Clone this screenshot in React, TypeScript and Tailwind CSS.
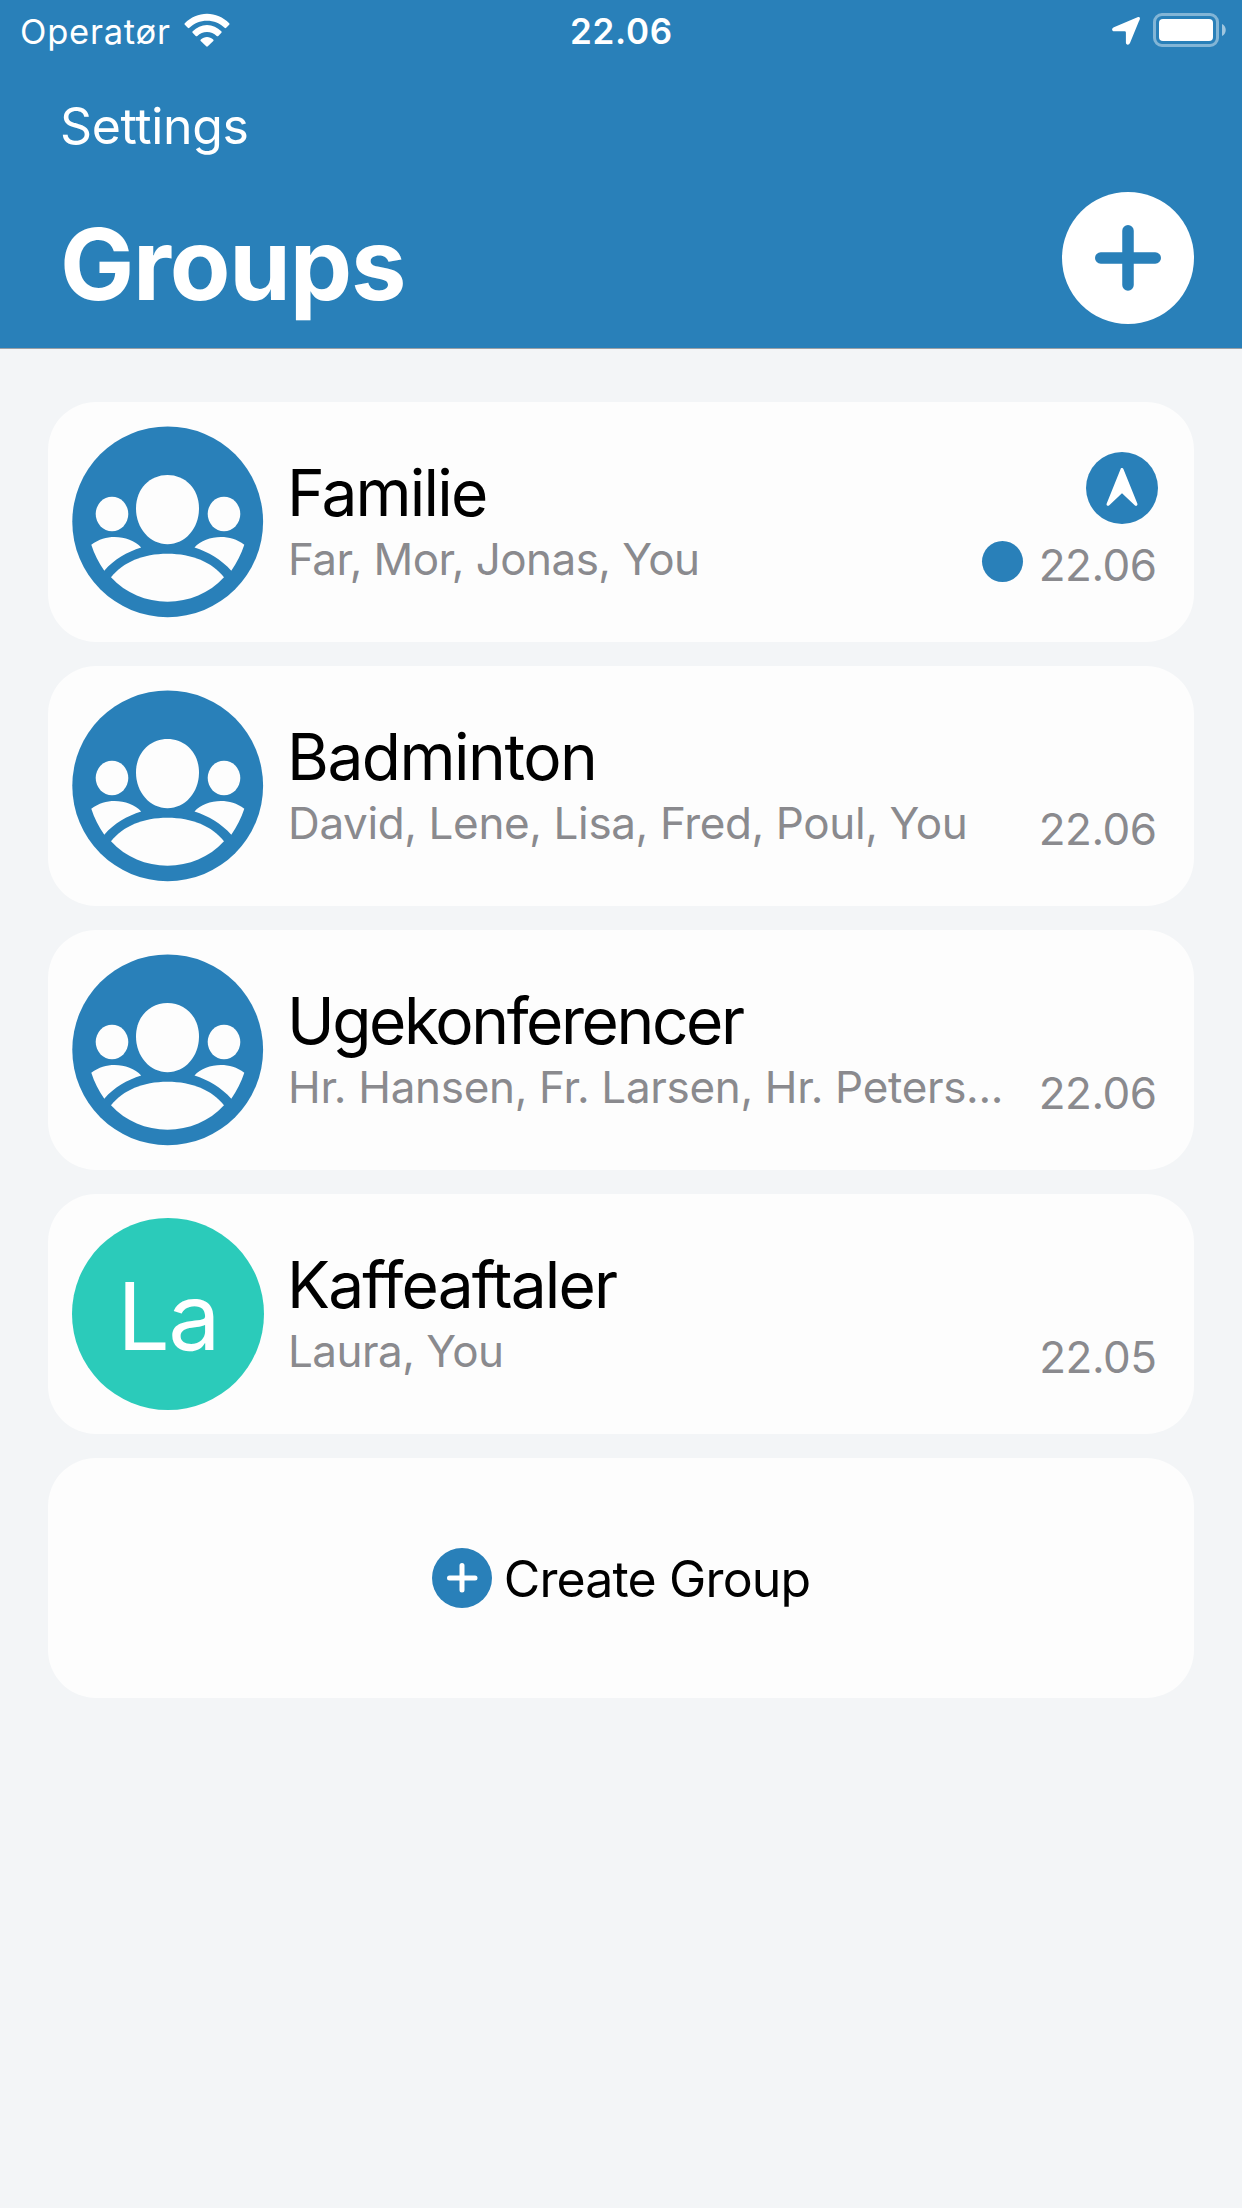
import type { ReactNode } from "react";

type Group = {
  name: string;
  nameClass: string;
  members: string;
  membersClass: string;
  time: string;
  active?: boolean;
  initials?: string;
};

const groups: Group[] = [
  {
    name: "Familie",
    nameClass: "tracking-[-1.8px]",
    members: "Far, Mor, Jonas, You",
    membersClass: "tracking-[-0.57px]",
    time: "22.06",
    active: true,
  },
  {
    name: "Badminton",
    nameClass: "tracking-[-1.5px]",
    members: "David, Lene, Lisa, Fred, Poul, You",
    membersClass: "tracking-[-0.37px]",
    time: "22.06",
  },
  {
    name: "Ugekonferencer",
    nameClass: "tracking-[-2.4px]",
    members: "Hr. Hansen, Fr. Larsen, Hr. Peters...",
    membersClass: "tracking-[-0.32px]",
    time: "22.06",
  },
  {
    name: "Kaffeaftaler",
    nameClass: "tracking-[-1.85px]",
    members: "Laura, You",
    membersClass: "tracking-[-0.53px]",
    time: "22.05",
    initials: "La",
  },
];

function WifiIcon() {
  return (
    <svg viewBox="0 0 46 34" className="h-[34px] w-[46px]" fill="#fff">
      <path d="M0.8 11.8 Q0 11 0.8 10.2 C7 4.2 14.6 0.8 23 0.8 C31.4 0.8 39 4.2 45.2 10.2 Q46 11 45.2 11.8 L42.2 14.8 Q41.4 15.6 40.6 14.8 C35.8 10.4 29.8 7.8 23 7.8 C16.2 7.8 10.2 10.4 5.4 14.8 Q4.6 15.6 3.8 14.8 Z" />
      <path d="M8.6 19.8 Q7.9 19 8.7 18.3 C12.7 14.5 17.5 12 23 12 C28.5 12 33.3 14.5 37.3 18.3 Q38.1 19 37.4 19.8 L34.3 22.9 Q33.5 23.7 32.7 23 C30 20.6 26.8 19 23 19 C19.2 19 16 20.6 13.3 23 Q12.5 23.7 11.7 22.9 Z" />
      <path d="M16.7 27.9 Q16 27.1 16.8 26.4 C18.6 24.9 20.7 24 23 24 C25.3 24 27.4 24.9 29.2 26.4 Q30 27.1 29.3 27.9 L23.8 33.3 Q23 34 22.2 33.3 Z" />
    </svg>
  );
}

function LocationArrowIcon() {
  return (
    <svg viewBox="0 0 28 28" className="h-7 w-7" fill="#fff">
      <path d="M25.5 0.3 C27.3 -0.4 28.3 0.7 27.8 2.3 C27.6 3 27.3 3.7 26.9 4.3 L18.1 25.8 C17.1 28.5 13.9 28.3 13.9 25.6 L13.9 15.5 Q13.9 14.3 12.7 14.3 L2.3 14.3 C-0.4 14.3 -0.7 11.3 1.9 10.2 Z" />
    </svg>
  );
}

function BatteryIcon() {
  return (
    <svg viewBox="0 0 74 34" className="h-[34px] w-[74px]">
      <rect x="1.5" y="1.5" width="63" height="31" rx="7.5" fill="none" stroke="#fff" strokeOpacity="0.42" strokeWidth="3" />
      <rect x="6" y="6" width="54" height="22" rx="4" fill="#fff" />
      <path d="M69 11 C74 13 74 21 69 23 Z" fill="#fff" fillOpacity="0.55" />
    </svg>
  );
}

function PeopleAvatar() {
  return (
    <svg viewBox="0 0 192 192" className="h-48 w-48 shrink-0">
      <circle cx="95.7" cy="95.8" r="95.4" fill="#2980b9" />
      <g fill="#fdfdfd">
        <path d="M95.5 49 C113 49 127 62.5 127 82.5 C127 102.5 113 118.2 95.5 118.2 C78 118.2 64 102.5 64 82.5 C64 62.5 78 49 95.5 49 Z" />
        <ellipse cx="40" cy="88" rx="16.3" ry="17.3" />
        <ellipse cx="152" cy="88" rx="16.3" ry="17.3" />
        <path d="M19.3 118.8 C27 113 34.5 111 42.5 111 C53 111 63 114.5 69.2 121.6 C55 126 42 133.5 32.3 144.7 C27 137 22 128 19.3 118.8 Z" />
        <path d="M172.3 118.8 C165 113 157 111 149 111 C138.5 111 128.5 114.5 122.5 121.6 C136.5 126 149 133.5 159.3 144.7 C164.5 137 169.5 128 172.3 118.8 Z" />
        <path d="M39 151.3 C51 136 71 127.7 95.5 127.7 C120 127.7 140 136 152 151.3 C137 167.5 117 175.7 95.5 175.7 C74 175.7 54 167.5 39 151.3 Z" />
      </g>
    </svg>
  );
}

function NavigationBadge() {
  return (
    <svg viewBox="0 0 72 72" className="h-[72px] w-[72px]">
      <circle cx="36" cy="36" r="36" fill="#2980b9" />
      <path
        d="M36 17.5 L22 52.3 L36 39.2 L50 52.3 Z"
        fill="#fff"
        stroke="#fff"
        strokeWidth="3"
        strokeLinejoin="round"
      />
    </svg>
  );
}

function Card({ children, className = "" }: { children: ReactNode; className?: string }) {
  return <div className={`flex h-60 rounded-[48px] bg-[#fdfdfd] ${className}`}>{children}</div>;
}

function GroupCard({ group }: { group: Group }) {
  return (
    <Card className="items-center pr-9 pl-6">
      {group.initials ? (
        <div className="flex h-48 w-48 shrink-0 items-center justify-center rounded-full bg-[#2bcbba] pt-1 text-[93px] leading-none tracking-[-1.58px] text-white">
          {group.initials}
        </div>
      ) : (
        <PeopleAvatar />
      )}
      <div className="-mt-1 ml-[23px] min-w-0 flex-1">
        <h2 className={`text-[64px] leading-[76px] whitespace-nowrap text-black ${group.nameClass}`}>{group.name}</h2>
        <p className={`mt-px pl-px text-[44px] leading-[54px] whitespace-nowrap text-[#8a8a8e] ${group.membersClass}`}>
          {group.members}
        </p>
      </div>
      <div className="flex h-full flex-col items-end pt-[50px]">
        <div className="h-[72px]">{group.active && <NavigationBadge />}</div>
        <div className="mt-3.5 mr-[1.5px] flex items-center gap-4">
          {group.active && <span className="mb-2 h-[41px] w-[41px] rounded-full bg-[#2980b9]" />}
          <time className="text-[44px] leading-[54px] tracking-[-0.5px] text-[#8a8a8e]">{group.time}</time>
        </div>
      </div>
    </Card>
  );
}

export default function App() {
  return (
    <div className="flex h-[2208px] w-[1242px] flex-col bg-[#f3f5f7] font-['Inter',sans-serif]">
      <header className="flex h-[349px] flex-col border-b border-[#9aa0a6] bg-[#2980b9] text-white">
        <div className="grid h-[60px] grid-cols-3 items-center pr-[15px] pl-5">
          <div className="flex items-center gap-[13px]">
            <span className="mt-1 text-[34.5px] leading-none tracking-[0.77px]">Operatør</span>
            <WifiIcon />
          </div>
          <div className="mt-0.5 mr-1 text-center text-[35px] leading-none font-semibold tracking-[0.7px]">22.06</div>
          <div className="flex items-center justify-end gap-[13px]">
            <div className="mt-0.5">
              <LocationArrowIcon />
            </div>
            <BatteryIcon />
          </div>
        </div>
        <nav className="flex h-[132px] items-center pl-[60px]">
          <a className="text-[50px] leading-[60px] tracking-[-0.35px]">Settings</a>
        </nav>
        <div className="flex h-[132px] items-center justify-between pr-12 pl-[60px]">
          <h1 className="pt-[11px] text-[99px] leading-[120px] font-bold tracking-[-1.19px]">Groups</h1>
          <button className="flex h-[132px] w-[132px] items-center justify-center rounded-full bg-white">
            <svg viewBox="0 0 66 66" className="h-[66px] w-[66px]" fill="none" stroke="#2980b9" strokeWidth="11.5" strokeLinecap="round">
              <path d="M33 5.75 V60 M5.75 33 H60.25" />
            </svg>
          </button>
        </div>
      </header>

      <main className="flex flex-col gap-6 px-12 pt-[53px]">
        {groups.map((group) => (
          <GroupCard key={group.name} group={group} />
        ))}
        <Card className="items-center justify-center gap-3">
          <svg viewBox="0 0 60 60" className="h-[60px] w-[60px]">
            <circle cx="30" cy="30" r="30" fill="#2980b9" />
            <path d="M30 17.5 V42 M17.5 30 H43" stroke="#fff" strokeWidth="5" strokeLinecap="round" />
          </svg>
          <span className="pt-0.5 text-[50px] leading-[60px] tracking-[-0.85px] text-black">Create Group</span>
        </Card>
      </main>
    </div>
  );
}
